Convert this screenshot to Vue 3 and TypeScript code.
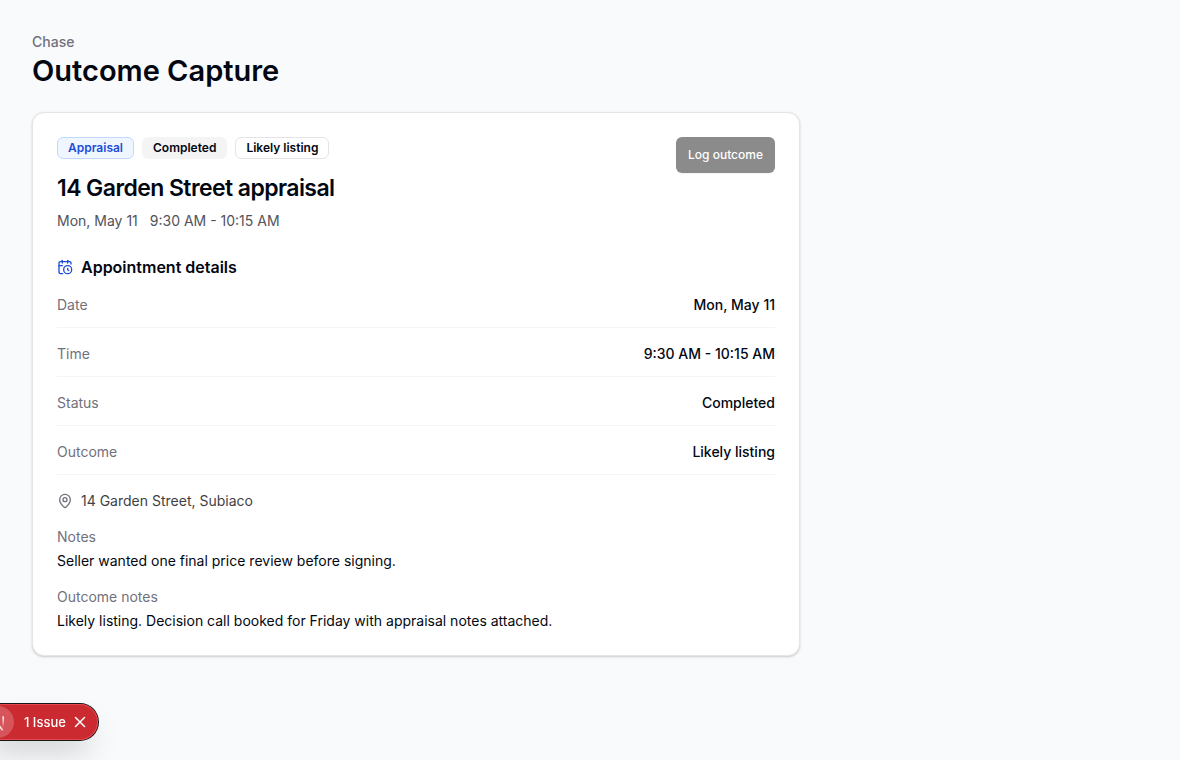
<script setup lang="ts">
interface Detail {
  label: string
  value: string
}

const details: Detail[] = [
  { label: 'Date', value: 'Mon, May 11' },
  { label: 'Time', value: '9:30 AM - 10:15 AM' },
  { label: 'Status', value: 'Completed' },
  { label: 'Outcome', value: 'Likely listing' },
]
</script>

<template>
  <main class="page">
    <header class="page-header">
      <p class="eyebrow">Chase</p>
      <h1>Outcome Capture</h1>
    </header>

    <article class="card">
      <div class="card-top">
        <div>
          <div class="badges">
            <span class="badge badge-blue">Appraisal</span>
            <span class="badge badge-gray">Completed</span>
            <span class="badge badge-outline">Likely listing</span>
          </div>
          <h2>14 Garden Street appraisal</h2>
          <p class="when"><span>Mon, May 11</span><span>9:30 AM - 10:15 AM</span></p>
        </div>
        <button class="log" type="button" disabled>Log outcome</button>
      </div>

      <section>
        <h3>
          <svg class="icon icon-blue" viewBox="0 0 24 24" aria-hidden="true">
            <path d="M16 14v2.2l1.6 1" /><path d="M16 2v4" /><path d="M21 7.5V6a2 2 0 0 0-2-2H5a2 2 0 0 0-2 2v14a2 2 0 0 0 2 2h3.5" /><path d="M3 10h5" /><path d="M8 2v4" /><circle cx="16" cy="16" r="6" />
          </svg>
          Appointment details
        </h3>
        <dl class="details">
          <div v-for="item in details" :key="item.label" class="row">
            <dt>{{ item.label }}</dt>
            <dd>{{ item.value }}</dd>
          </div>
        </dl>
      </section>

      <p class="place">
        <svg class="icon icon-gray" viewBox="0 0 24 24" aria-hidden="true">
          <path d="M20 10c0 4.993-5.539 10.193-7.399 11.799a1 1 0 0 1-1.202 0C9.539 20.193 4 14.993 4 10a8 8 0 0 1 16 0" /><circle cx="12" cy="10" r="3" />
        </svg>
        14 Garden Street, Subiaco
      </p>

      <section class="note">
        <p class="note-label">Notes</p>
        <p>Seller wanted one final price review before signing.</p>
      </section>
      <section class="note">
        <p class="note-label">Outcome notes</p>
        <p>Likely listing. Decision call booked for Friday with appraisal notes attached.</p>
      </section>
    </article>

    <aside class="issue">
      <button class="mark" type="button" aria-label="Open issues">
        <svg viewBox="0 0 40 40" aria-hidden="true">
          <defs>
            <linearGradient id="mark-diagonal" gradientUnits="userSpaceOnUse" x1="20" y1="22" x2="29" y2="33">
              <stop stop-color="#fff" /><stop offset="0.6" stop-color="#fff" stop-opacity="0.8" /><stop offset="1" stop-color="#fff" stop-opacity="0" />
            </linearGradient>
            <linearGradient id="mark-stem" gradientUnits="userSpaceOnUse" x1="26" y1="13" x2="26" y2="27">
              <stop stop-color="#fff" /><stop offset="1" stop-color="#fff" stop-opacity="0" />
            </linearGradient>
          </defs>
          <path stroke="url(#mark-diagonal)" d="M13.3 28V14L26 30.5" />
          <rect x="25.5" y="13" width="2" height="14" stroke="none" fill="url(#mark-stem)" />
        </svg>
      </button>
      <button class="issue-text" type="button">1 Issue</button>
      <button class="close" type="button" aria-label="Dismiss">
        <svg viewBox="0 0 12 12" aria-hidden="true"><path d="M1.5 1.5l9 9M10.5 1.5l-9 9" /></svg>
      </button>
    </aside>
  </main>
</template>

<style>
body {
  margin: 0;
  background: #f9fafc;
}
</style>

<style scoped>
.page {
  box-sizing: border-box;
  min-height: 100vh;
  padding: 32px;
  background: #f9fafc;
  color: #030712;
  font-family: Inter, sans-serif;
  font-size: 14px;
  line-height: 20px;
}

h1, h2, h3, p, dl, dd {
  margin: 0;
}

button {
  border: 0;
  padding: 0;
  font: inherit;
}

.eyebrow {
  color: #71717b;
  font-weight: 500;
}

h1 {
  font-size: 29px;
  line-height: 38px;
  font-weight: 600;
}

.page-header {
  margin-bottom: 22px;
}

.card {
  box-sizing: border-box;
  max-width: 768px;
  padding: 24px;
  border: 1px solid #e5e5e5;
  border-radius: 12px;
  background: #fff;
  box-shadow: 0 1px 3px rgb(0 0 0 / 10%), 0 1px 2px rgb(0 0 0 / 10%);
}

.card-top {
  display: flex;
  justify-content: space-between;
  align-items: flex-start;
  margin-bottom: 24px;
}

.badges {
  display: flex;
  gap: 8px;
}

.badge {
  padding: 2px 10px;
  border: 1px solid transparent;
  border-radius: 6px;
  font-size: 12px;
  line-height: 16px;
  font-weight: 600;
}

.badge-blue {
  border-color: #bedbff;
  background: #eff6ff;
  color: #1d4ed8;
}

.badge-gray {
  background: #f4f4f5;
}

.badge-outline {
  border-color: #e4e4e7;
}

h2 {
  margin-top: 12px;
  font-size: 23px;
  line-height: 34px;
  font-weight: 600;
  letter-spacing: -0.025em;
}

.when {
  display: flex;
  gap: 12px;
  margin-top: 6px;
  color: #52525c;
}

.log {
  height: 36px;
  padding: 0 12px;
  border-radius: 6px;
  background: #8b8b8c;
  box-shadow: 0 1px 2px rgb(0 0 0 / 5%);
  color: #fff;
  font-size: 12px;
  font-weight: 500;
}

h3 {
  display: flex;
  align-items: center;
  gap: 8px;
  font-size: 16px;
  line-height: 24px;
  font-weight: 600;
}

.icon {
  width: 16px;
  height: 16px;
  fill: none;
  stroke: currentColor;
  stroke-width: 2;
  stroke-linecap: round;
  stroke-linejoin: round;
}

.icon-blue {
  color: #1d4ed8;
}

.icon-gray {
  color: #71717b;
}

.details {
  display: grid;
  gap: 16px;
  margin-top: 16px;
}

.row {
  display: flex;
  justify-content: space-between;
  padding-bottom: 12px;
  border-bottom: 1px solid #f4f4f5;
}

dt, .note-label {
  color: #71717b;
}

dd {
  font-weight: 500;
}

.place {
  display: flex;
  align-items: center;
  gap: 8px;
  margin-top: 16px;
  color: #3f3f46;
}

.note {
  display: grid;
  gap: 4px;
  margin-top: 16px;
}

.issue {
  position: fixed;
  left: -20px;
  bottom: 20px;
  display: flex;
  align-items: center;
  box-sizing: border-box;
  height: 36px;
  padding: 2px 12px 2px 2px;
  border-radius: 18px;
  background: #ca2a30;
  box-shadow: 0 0 0 1px #171717, inset 0 0 0 1px #e5484d, 0 16px 32px -8px rgb(0 0 0 / 24%);
  color: #fff;
}

.mark {
  width: 32px;
  height: 32px;
  border-radius: 50%;
  background: #d5555a;
}

.mark svg {
  display: block;
  width: 32px;
  height: 32px;
  fill: none;
  stroke-width: 2;
}

.issue-text {
  margin-left: 10px;
  background: none;
  color: #fff;
  font-size: 13px;
  font-weight: 500;
}

.close {
  width: 12px;
  height: 12px;
  margin-left: 8px;
  background: none;
  color: #fff;
}

.close svg {
  display: block;
  fill: none;
  stroke: currentColor;
  stroke-width: 1.5;
  stroke-linecap: round;
}
</style>
